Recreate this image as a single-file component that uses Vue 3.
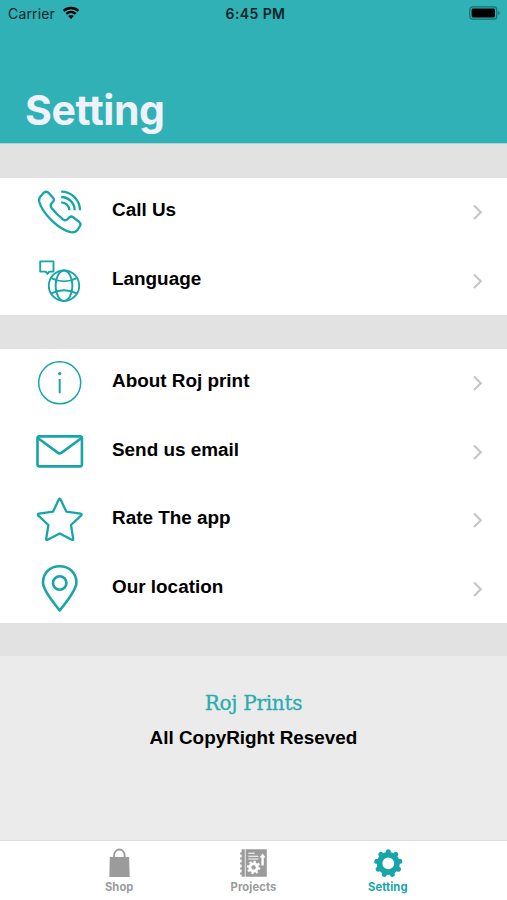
<template>
  <div class="screen">
    <header class="header">
      <div class="status">
        <div class="carrier">
          <span>Carrier</span>
          <svg class="wifi" width="18" height="14" viewBox="0 0 18 14">
            <path d="M1.6 4.9C5.8 1 12.2 1 16.4 4.9M4.3 7.8C7 5.4 11 5.4 13.7 7.8" />
            <path class="wifi-dot" d="M9 12.9 6.2 10C7.8 8.7 10.2 8.7 11.8 10Z" />
          </svg>
        </div>
        <span class="time">6:45 PM</span>
        <svg class="battery" width="32" height="14" viewBox="0 0 32 14">
          <rect class="battery-case" x="0.8" y="0.8" width="27" height="12.4" rx="3" />
          <rect x="2.6" y="2.6" width="23.4" height="8.8" rx="1.4" />
          <path class="battery-tip" d="M29.2 4.8Q32 7 29.2 9.2Z" />
        </svg>
      </div>
      <h1 class="title">Setting</h1>
    </header>

    <main class="content">
      <ul class="group" v-for="(group, index) in groups" :key="index">
        <li class="row" v-for="item in group" :key="item.icon">
          <svg class="icon" :class="item.icon" width="60" height="60" viewBox="0 0 60 60">
            <template v-if="item.icon === 'phone'">
              <path d="M10 15 14 10.6Q16.5 8.6 18.8 11L23.6 16.4Q24.6 18 23.2 19.6L20.7 22.5Q20.3 24.5 21.8 26.2Q27 32.7 33.3 37.6Q35.2 39 37 37.6L39.6 35.2Q41 34 42.8 35L49.3 40Q51.3 41.8 50 44L47.2 48.4Q44.8 50.8 40.8 50.2C28.8 47.4 12.2 31.5 9.2 19.5Q8.7 17 10 15Z" />
              <path d="M31.2 9.7A18.8 18.8 0 0 1 50 28.3M31.2 15A13.5 13.5 0 0 1 44.7 28.3M31.2 20.3A8.2 8.2 0 0 1 39.4 28.3" />
            </template>
            <template v-else-if="item.icon === 'globe'">
              <path d="M10.2 10.4H23.5V20.6H19.3L17.5 22.9 15.7 20.6H10.2Z" />
              <circle cx="34" cy="34.7" r="15.2" />
              <ellipse cx="34" cy="34.7" rx="8.4" ry="15.2" />
              <path d="M21.2 27.2Q34 33.6 46.8 27.2M21.2 42.4Q34 36 46.8 42.4" />
            </template>
            <template v-else-if="item.icon === 'info'">
              <circle cx="29.7" cy="29.8" r="21" />
              <path class="stem" d="M29.7 26V40.2" />
              <circle class="dot" cx="29.7" cy="20.6" r="1.7" />
            </template>
            <template v-else-if="item.icon === 'mail'">
              <rect x="7.5" y="14.4" width="44.4" height="30" rx="1.8" />
              <path d="M7.8 16 27.7 30.6Q29.7 32 31.7 30.6L51.6 16" />
            </template>
            <path
              v-else-if="item.icon === 'star'"
              d="M28.8 9.5Q29.7 7.8 30.6 9.5L36.3 21.6 50.5 23.7Q52.4 24.1 51 25.6L41 35 43.2 48.8Q43.4 50.5 41.8 49.8L29.7 43.4 17.6 49.8Q16 50.5 16.2 48.8L18.4 35 8.4 25.6Q7 24.1 8.9 23.7L23.1 21.6Z"
            />
            <template v-else>
              <path d="M29.7 51.5C24 44 13 32 13 23.6C13 13.8 20.2 7.3 29.7 7.3S46.4 13.8 46.4 23.6C46.4 32 35.4 44 29.7 51.5Z" />
              <circle cx="29.7" cy="24" r="6.7" />
            </template>
          </svg>
          <span class="label">{{ item.label }}</span>
          <svg class="chevron" width="12" height="18" viewBox="0 0 12 18">
            <path d="M2 2.4 8.8 9.2 2 16" />
          </svg>
        </li>
      </ul>
    </main>

    <footer class="footer">
      <div class="brand">Roj Prints</div>
      <div class="copy">All CopyRight Reseved</div>
    </footer>

    <nav class="tabs">
      <button
        v-for="tab in tabs"
        :key="tab"
        class="tab"
        :class="{ active: tab === current }"
        type="button"
        @click="current = tab"
      >
        <svg width="30" height="30" viewBox="0 0 30 30">
          <template v-if="tab === 'Shop'">
            <path d="M5.8 9H25.1L25.7 29H5.3Z" />
            <path class="handle" d="M10.1 11V8C10.1-.6 20.7-.6 20.7 8V11" />
          </template>
          <template v-else-if="tab === 'Projects'">
            <path d="M3.6 1.2H6.8V28.8H3.6V26.5H2.1V24.5H3.6V21.5H2.1V19.5H3.6V16.5H2.1V14.5H3.6V11.5H2.1V9.5H3.6V6.5H2.1V4.5H3.6ZM7.6 1.2H28.8V28.8H7.6Z" />
            <path class="cut-line" d="M10.3 5.2H16.8M10.3 8.2H20.3M10.3 11H20.3" />
            <path class="cut" d="M24.6 5.5 27.6 9.5H25.8V17.5H23.4V9.5H21.6Z" />
            <circle class="cut" cx="15.6" cy="19.4" r="5.2" />
            <circle class="cut-teeth" cx="15.6" cy="19.4" r="5.4" pathLength="16" />
            <circle cx="15.6" cy="19.4" r="2.2" />
          </template>
          <template v-else>
            <circle class="ring" cx="15.3" cy="15.4" r="8.7" />
            <circle
              v-for="n in 9"
              :key="n"
              cx="15.3"
              cy="3.7"
              r="2.5"
              :transform="`rotate(${(n - 1) * 40} 15.3 15.4)`"
            />
          </template>
        </svg>
        <span>{{ tab }}</span>
      </button>
    </nav>
  </div>
</template>

<script setup>
import { ref } from 'vue'

const groups = [
  [
    { icon: 'phone', label: 'Call Us' },
    { icon: 'globe', label: 'Language' },
  ],
  [
    { icon: 'info', label: 'About Roj print' },
    { icon: 'mail', label: 'Send us email' },
    { icon: 'star', label: 'Rate The app' },
    { icon: 'pin', label: 'Our location' },
  ],
]

const tabs = ['Shop', 'Projects', 'Setting']
const current = ref('Setting')
</script>

<style scoped>
.screen {
  display: flex;
  flex-direction: column;
  width: 507px;
  height: 900px;
  overflow: hidden;
  background: #ebebeb;
  font-family: "Liberation Sans", Arial, sans-serif;
  color: #000;
}

.header {
  box-sizing: border-box;
  height: 144px;
  flex: none;
  background: #2fb1b6;
  border-bottom: 1px solid #a9d3d5;
  font-family: Inter, sans-serif;
}

.status {
  display: grid;
  grid-template-columns: 1fr auto 1fr;
  align-items: center;
  height: 26px;
  padding: 0 6px 0 8px;
  font-size: 14px;
  color: #0b2426;
}

.carrier {
  display: flex;
  align-items: center;
  gap: 7px;
  letter-spacing: 0.15px;
}

.wifi {
  fill: none;
  stroke: #000;
  stroke-width: 2.3;
}

.wifi-dot {
  fill: #000;
  stroke: none;
}

.time {
  padding-left: 2px;
  font-weight: 600;
  letter-spacing: 0.4px;
}

.battery {
  justify-self: end;
}

.battery-case {
  fill: none;
  stroke: #176f73;
  stroke-width: 1.2;
}

.battery-tip {
  fill: #176f73;
}

.title {
  margin: 59px 0 0 25px;
  font-size: 41px;
  line-height: 50px;
  font-weight: 700;
  letter-spacing: -0.4px;
  color: #eff2fa;
}

.content {
  flex: none;
  display: flex;
  flex-direction: column;
  gap: 34px;
  padding: 34px 0 33px;
  background: #e2e2e2;
}

.group {
  margin: 0;
  padding: 0;
  list-style: none;
  background: #fff;
}

.row {
  display: flex;
  align-items: center;
  height: 68.5px;
  padding: 0 23px 0 30px;
}

.icon {
  flex: none;
  fill: none;
  stroke: #17a5aa;
  stroke-width: 2.3;
  stroke-linejoin: round;
}

.globe {
  stroke-width: 1.9;
}

.info {
  stroke-width: 1.5;
}

.info .stem {
  stroke-width: 2;
}

.info .dot {
  fill: #17a5aa;
  stroke: none;
}

.mail,
.pin {
  stroke-width: 2.6;
}

.label {
  flex: 1;
  padding: 0 0 4px 22px;
  font-size: 18.9px;
  font-weight: 700;
}

.chevron {
  fill: none;
  stroke: #c5c5c8;
  stroke-width: 2.1;
}

.footer {
  flex: 1;
  padding-top: 35px;
  text-align: center;
}

.brand {
  font-family: "DejaVu Serif", serif;
  font-size: 20px;
  line-height: 24px;
  letter-spacing: -0.3px;
  color: #2aacb0;
  -webkit-text-stroke: 0.3px #2aacb0;
}

.copy {
  margin-top: 12px;
  font-size: 18.9px;
  line-height: 22px;
  font-weight: 700;
}

.tabs {
  box-sizing: border-box;
  display: flex;
  justify-content: center;
  height: 60px;
  border-top: 1px solid #dcdcdc;
  background: #fff;
}

.tab {
  display: flex;
  flex-direction: column;
  align-items: center;
  width: 134.3px;
  padding: 7px 0 0;
  border: 0;
  background: none;
  font-family: Inter, sans-serif;
  font-size: 11.2px;
  line-height: 18px;
  font-weight: 700;
  letter-spacing: 0.1px;
  color: #9b9b9b;
  fill: currentColor;
}

.tab.active {
  color: #17a5aa;
}

.handle {
  fill: none;
  stroke: currentColor;
  stroke-width: 1.9;
}

.cut {
  fill: #fff;
}

.cut-line {
  stroke: #fff;
  stroke-width: 1.1;
}

.cut-teeth {
  fill: none;
  stroke: #fff;
  stroke-width: 2.8;
  stroke-dasharray: 1 1;
}

.ring {
  fill: none;
  stroke: currentColor;
  stroke-width: 5.6;
}
</style>
